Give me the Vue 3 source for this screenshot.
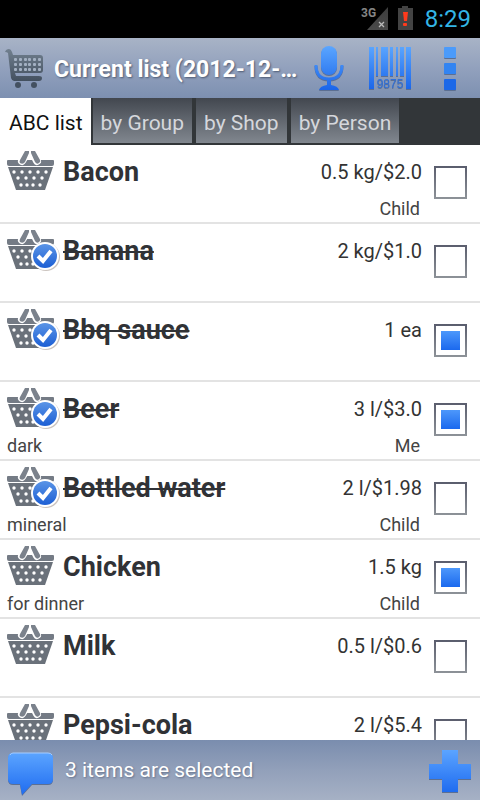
<script setup>
import { ref, computed } from 'vue'

const tabs = ['ABC list', 'by Group', 'by Shop', 'by Person']
const activeTab = ref('ABC list')

const items = ref([
  { name: 'Bacon', amount: '0.5 kg/$2.0', note: '', person: 'Child', bought: false, selected: false },
  { name: 'Banana', amount: '2 kg/$1.0', note: '', person: '', bought: true, selected: false },
  { name: 'Bbq sauce', amount: '1 ea', note: '', person: '', bought: true, selected: true },
  { name: 'Beer', amount: '3 l/$3.0', note: 'dark', person: 'Me', bought: true, selected: true },
  { name: 'Bottled water', amount: '2 l/$1.98', note: 'mineral', person: 'Child', bought: true, selected: false },
  { name: 'Chicken', amount: '1.5 kg', note: 'for dinner', person: 'Child', bought: false, selected: true },
  { name: 'Milk', amount: '0.5 l/$0.6', note: '', person: '', bought: false, selected: false },
  { name: 'Pepsi-cola', amount: '2 l/$5.4', note: '', person: '', bought: false, selected: false },
])
const selectedCount = computed(() => items.value.filter((i) => i.selected).length)

const cartHoles = [14, 19, 24, 28, 33, 38]
const cartRows = [20, 25, 30]
const basketHoles = [
  [14, 27], [22, 27], [30, 27], [38, 27], [46, 27],
  [18, 33], [26, 33], [34, 33], [42, 33],
  [21, 40], [27, 40], [33, 40], [40, 40],
]
const bars = [[9, 5, 42], [16, 2, 29], [21, 7, 29], [30, 3, 29], [36, 2, 29], [40, 4, 29], [46, 5, 42]]
</script>

<template>
  <div class="app">
    <div class="status">
      <svg class="signal" viewBox="0 0 60 38" aria-hidden="true">
        <defs>
          <linearGradient id="sig" x1="0" y1="0" x2="0" y2="1">
            <stop offset="0" stop-color="#3c3c3c" /><stop offset="1" stop-color="#4a4a4a" />
          </linearGradient>
        </defs>
        <text x="0" y="17" class="net">3G</text>
        <path d="M27 7V30H6Z" fill="url(#sig)" />
        <path d="M18 22L23 27M23 22L18 27" stroke="#bbb" stroke-width="1.3" />
        <path d="M41 6h6v2h5v22H37V8h4Z" fill="#434343" />
        <path d="M42 12h5l-1 9h-3Z" fill="#ff3a1c" />
        <rect x="42" y="23" width="4" height="3" rx="1" fill="#ff3a1c" />
      </svg>
      <span class="clock">8:29</span>
    </div>

    <header class="bar">
      <svg class="cart" viewBox="0 0 54 60" aria-hidden="true">
        <defs>
          <linearGradient id="cartFill" x1="0" y1="0" x2="0" y2="1">
            <stop offset="0" stop-color="#71808f" /><stop offset="1" stop-color="#43505f" />
          </linearGradient>
        </defs>
        <path
          d="M5 14Q6 11 9 11Q11 11 12 14L13 17H40Q43 17 43 20V32Q43 35 40 35H15L16 38H39Q42 38 42 40Q42 43 39 43H14Q12 43 11 40L8 15Q7 14 5 14Z"
          fill="url(#cartFill)"
        />
        <circle cx="18" cy="47" r="3" fill="#435060" />
        <circle cx="34" cy="47" r="3" fill="#435060" />
        <g fill="#a3b0c2">
          <template v-for="y in cartRows" :key="y">
            <rect v-for="x in cartHoles" :key="x" :x="x" :y="y" width="3" height="3" rx="1" />
          </template>
        </g>
      </svg>
      <h1 class="title">Current list (2012-12-…</h1>
      <button class="tool" type="button" aria-label="Voice input">
        <svg viewBox="0 0 60 60" class="glyph">
          <defs>
            <linearGradient id="blue" gradientUnits="userSpaceOnUse" x1="0" y1="8" x2="0" y2="54">
              <stop offset="0" stop-color="#5ba6ff" /><stop offset="1" stop-color="#1762e8" />
            </linearGradient>
          </defs>
          <rect x="21" y="8" width="16" height="29" rx="8" fill="url(#blue)" />
          <path d="M16 27Q16 41 29 41Q42 41 42 27" fill="none" stroke="url(#blue)" stroke-width="3" />
          <path d="M27 41h4v6q7 1 8 5H19q1-4 8-5Z" fill="url(#blue)" />
        </svg>
      </button>
      <button class="tool" type="button" aria-label="Scan barcode">
        <svg viewBox="0 0 60 60" class="glyph">
          <rect v-for="b in bars" :key="b[0]" :x="b[0]" y="9" :width="b[1]" :height="b[2]" fill="url(#blue)" />
          <text x="30" y="50" class="digits">9875</text>
        </svg>
      </button>
      <button class="tool" type="button" aria-label="Menu">
        <svg viewBox="0 0 60 60" class="glyph">
          <rect x="24" y="9" width="12" height="11" rx="1" fill="#4b9bfb" />
          <rect x="24" y="25" width="12" height="11" rx="1" fill="#3284f2" />
          <rect x="24" y="41" width="12" height="11" rx="1" fill="#1b68e8" />
        </svg>
      </button>
    </header>

    <nav class="tabs">
      <button
        v-for="tab in tabs"
        :key="tab"
        type="button"
        class="tab"
        :class="{ active: tab === activeTab }"
        @click="activeTab = tab"
      >{{ tab }}</button>
    </nav>

    <ul class="list">
      <li v-for="(item, i) in items" :key="item.name" class="row">
        <div class="info">
          <div class="line">
            <svg class="basket" viewBox="0 0 63 48" aria-hidden="true">
              <defs>
                <linearGradient id="check" x1="0" y1="0" x2="0" y2="1">
                  <stop offset="0" stop-color="#5a94e6" /><stop offset="1" stop-color="#1d5fd4" />
                </linearGradient>
              </defs>
              <path d="M8 15H53Q54 15 54 16V19Q54 21 52 21H9Q7 21 7 19V16Q7 15 8 15Z" fill="#747b85" />
              <path d="M8 22H53L45 45H16Z" fill="#6a717a" />
              <path d="M22 16L27 8M37 16L33 8" stroke="#fff" stroke-width="8" stroke-linecap="round" />
              <path d="M25 6H29V8L25 17Q23 20 20 18Q19 17 20 15ZM31 6H35L40 15Q41 17 39 18Q37 20 35 17L31 8Z" fill="#7b828c" />
              <circle v-for="h in basketHoles" :key="h.join()" :cx="h[0]" :cy="h[1]" r="1.7" fill="#fff" />
              <g v-if="item.bought">
                <circle cx="46" cy="33" r="14" fill="#6b5548" opacity="0.35" />
                <circle cx="45" cy="32" r="14" fill="#fff" />
                <circle cx="45" cy="32" r="12" fill="url(#check)" />
                <path d="M38 32L43 37L51 27" fill="none" stroke="#fff" stroke-width="4" />
              </g>
            </svg>
            <label class="name" :class="{ bought: item.bought }" :for="'item-' + i">{{ item.name }}</label>
            <span class="amount">{{ item.amount }}</span>
          </div>
          <div class="sub">
            <span>{{ item.note }}</span>
            <span>{{ item.person }}</span>
          </div>
        </div>
        <input :id="'item-' + i" v-model="item.selected" type="checkbox" class="box" />
      </li>
    </ul>

    <footer class="bottom">
      <button class="tool" type="button" aria-label="Comments">
        <svg viewBox="0 0 60 60" class="glyph">
          <defs>
            <linearGradient id="bubble" x1="0" y1="0" x2="0" y2="1">
              <stop offset="0" stop-color="#5ba4ff" /><stop offset="1" stop-color="#1f6cf0" />
            </linearGradient>
          </defs>
          <path d="M13 13H48Q53 13 53 18V39Q53 44 48 44H32L22 55L20 44H13Q8 44 8 39V18Q8 13 13 13Z" fill="url(#bubble)" />
          <path d="M10 15Q11 13 13 13H48Q51 13 52 15" fill="none" stroke="#a5ccff" />
        </svg>
      </button>
      <span class="summary">{{ selectedCount }} items are selected</span>
      <button class="tool" type="button" aria-label="Add item">
        <svg viewBox="0 0 60 60" class="glyph">
          <path d="M22 10H38V24H51V39H38V52H22V39H9V24H22Z" fill="url(#bubble)" />
        </svg>
      </button>
    </footer>
  </div>
</template>

<style>
body {
  background: #fff;
}
</style>

<style scoped>
.app {
  display: flex;
  flex-direction: column;
  height: 100vh;
  overflow: hidden;
  font-family: Roboto, "Liberation Sans", sans-serif;
  color: #333;
}
.status {
  display: flex;
  flex: none;
  align-items: center;
  justify-content: flex-end;
  height: 38px;
  padding-right: 9px;
  background: #000;
}
.signal {
  width: 60px;
  height: 38px;
}
.net {
  font-size: 12px;
  font-weight: 700;
  fill: #858585;
}
.clock {
  margin-left: 4px;
  font-size: 24px;
  line-height: 40px;
  color: #33b5e5;
}
.bar {
  display: flex;
  flex: none;
  align-items: center;
  height: 60px;
  background: linear-gradient(#a8b3c6, #92a1bd 50%, #7d90b1);
}
.cart {
  flex: none;
  width: 54px;
  height: 60px;
}
.title {
  flex: 1;
  min-width: 0;
  padding-top: 4px;
  margin: 0;
  overflow: hidden;
  font-size: 23px;
  font-weight: 700;
  line-height: 56px;
  color: #fff;
  text-overflow: ellipsis;
  text-shadow: 1px 1px 2px #4d5a72;
  white-space: nowrap;
}
.tool {
  flex: none;
  width: 60px;
  height: 60px;
  padding: 0;
  background: none;
  border: 0;
}
.glyph {
  display: block;
  width: 60px;
  height: 60px;
  filter: drop-shadow(0 1px 0 #5c6f92);
}
.digits {
  font-size: 12px;
  fill: #2e6fd8;
  text-anchor: middle;
}
.tabs {
  display: flex;
  flex: none;
  gap: 4px;
  height: 47px;
  background: #323639;
}
.tab {
  height: 45px;
  padding: 4px 8px 0;
  font-family: inherit;
  font-size: 21px;
  line-height: 40px;
  color: #d5d7dc;
  background: linear-gradient(#42474f, #81878f);
  border: 0;
}
.tab.active {
  height: 47px;
  padding: 2px 8px 0 9px;
  margin-right: -2px;
  color: #111;
  background: #fff;
}
.list {
  flex: 1;
  min-height: 0;
  padding: 0;
  margin: 0;
  overflow: hidden;
  list-style: none;
}
.row {
  display: flex;
  height: 77px;
  padding-right: 13px;
  border-bottom: 2px solid #e3e3e3;
}
.info {
  flex: 1;
  min-width: 0;
}
.line {
  display: flex;
  height: 52px;
}
.basket {
  flex: none;
  width: 63px;
  height: 48px;
}
.name {
  flex: 1;
  font-size: 27px;
  font-weight: 700;
  line-height: 54px;
  color: #303236;
}
.bought {
  text-decoration: line-through;
  text-decoration-thickness: 2px;
}
.amount {
  padding-right: 12px;
  font-size: 20px;
  line-height: 54px;
}
.sub {
  display: flex;
  justify-content: space-between;
  padding: 0 14px 0 7px;
  font-size: 18px;
  line-height: 24px;
  color: #444;
}
.box {
  display: grid;
  flex: none;
  place-items: center;
  width: 33px;
  height: 33px;
  margin: 21px 0 0;
  appearance: none;
  background: linear-gradient(#fff, #fff) padding-box, linear-gradient(#5a5d6d, #8d9298) border-box;
  border: 2px solid transparent;
}
.box:checked::before {
  width: 19px;
  height: 19px;
  content: "";
  background: linear-gradient(#4d98fb, #1b69ee);
}
.bottom {
  display: flex;
  flex: none;
  align-items: center;
  height: 60px;
  background: linear-gradient(#7a8dae, #92a0ba 50%, #a6b1c5);
}
.summary {
  flex: 1;
  padding-left: 5px;
  font-size: 21px;
  line-height: 60px;
  color: #fff;
  text-shadow: 1px 1px 2px #66738c;
}
</style>
